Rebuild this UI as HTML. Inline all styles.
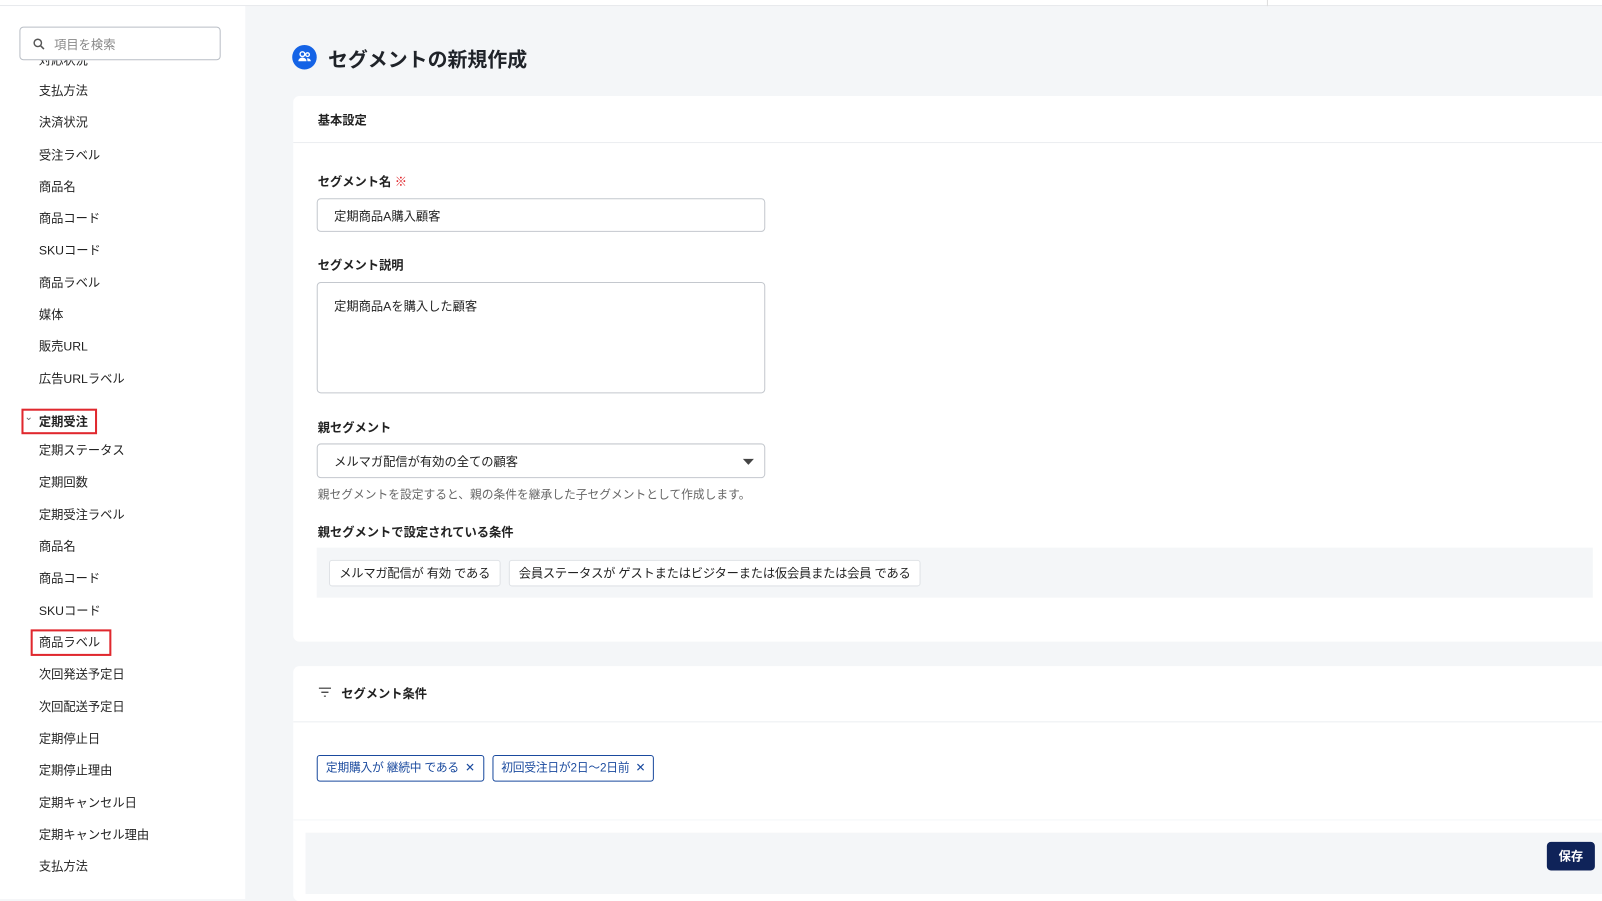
<!DOCTYPE html>
<html><head><meta charset="utf-8"><style>
*{box-sizing:border-box;margin:0;padding:0}
body{width:1602px;height:880px;overflow:hidden;background:#f4f6f8;font-family:"Liberation Sans","Noto Sans CJK JP",sans-serif;color:#1f2329;position:relative;font-size:12px}
#w{position:absolute;left:0;top:0;width:1568px;height:862px;transform:scale(1.0217);transform-origin:0 0}
.a{position:absolute;white-space:nowrap}
.side{position:absolute;left:0;top:6px;width:240px;height:874px;background:#fff;overflow:hidden}
.si{position:absolute;left:38px;font-size:12px;line-height:16px;color:#222}
.card{position:absolute;left:287px;width:1281px;background:#fff;border-radius:6px 0 0 6px}
.lbl{font-size:12px;font-weight:600;color:#222}
.inp{position:absolute;border:1px solid #c4c8ce;border-radius:4px;background:#fff;font-size:12px;color:#222}
.chips{position:absolute;display:flex;gap:8px;align-items:center}
.chip{height:26px;border:1px solid #dfe2e6;border-radius:3px;background:#fff;font-size:12px;line-height:24px;padding:0 9px;color:#222;white-space:nowrap;letter-spacing:-0.2px}
.tag{height:26px;border:1px solid #1a4a9e;border-radius:3px;background:#fff;font-size:11.5px;line-height:24px;padding:0 8px;color:#1a4a9e;white-space:nowrap;letter-spacing:-0.2px}
.red{position:absolute;border:2px solid #e0282e}
</style></head><body><div id="w">
<div class="a" style="left:0;top:0;width:1568px;height:6px;background:#fff;border-bottom:1px solid #e6e8eb"></div>
<div class="a" style="left:1240px;top:0;width:1px;height:6px;background:#ddd"></div>
<div class="side">
<div class="si" style="top:45px;">対応状況</div>
<div class="a" style="left:0;top:0;width:240px;height:53px;background:#fff"></div>
<div class="a" style="left:19px;top:20px;width:197px;height:33px;border:1px solid #b9bec5;border-radius:4px;background:#fff">
<svg class="a" style="left:12px;top:10px" width="12" height="12" viewBox="0 0 12 12"><circle cx="5" cy="5" r="3.6" fill="none" stroke="#555" stroke-width="1.4"/><path d="M7.7 7.7L11 11" stroke="#555" stroke-width="1.5"/></svg>
<span class="a" style="left:33px;top:8px;font-size:12px;color:#888">項目を検索</span></div>
<div class="si" style="top:75px">支払方法</div>
<div class="si" style="top:106px">決済状況</div>
<div class="si" style="top:138px">受注ラベル</div>
<div class="si" style="top:169px">商品名</div>
<div class="si" style="top:200px">商品コード</div>
<div class="si" style="top:231px">SKUコード</div>
<div class="si" style="top:263px">商品ラベル</div>
<div class="si" style="top:294px">媒体</div>
<div class="si" style="top:325px">販売URL</div>
<div class="si" style="top:357px">広告URLラベル</div>
<div class="a" style="left:24px;top:397px;font-size:10px;color:#666">⌄</div>
<div class="si" style="top:399px;font-weight:700">定期受注</div>
<div class="red" style="left:21px;top:394px;width:74px;height:25px"></div>
<div class="si" style="top:427px">定期ステータス</div>
<div class="si" style="top:458px">定期回数</div>
<div class="si" style="top:490px">定期受注ラベル</div>
<div class="si" style="top:521px">商品名</div>
<div class="si" style="top:552px">商品コード</div>
<div class="si" style="top:584px">SKUコード</div>
<div class="si" style="top:615px">商品ラベル</div>
<div class="red" style="left:30px;top:610px;width:79px;height:26px"></div>
<div class="si" style="top:646px">次回発送予定日</div>
<div class="si" style="top:678px">次回配送予定日</div>
<div class="si" style="top:709px">定期停止日</div>
<div class="si" style="top:740px">定期停止理由</div>
<div class="si" style="top:772px">定期キャンセル日</div>
<div class="si" style="top:803px">定期キャンセル理由</div>
<div class="si" style="top:834px">支払方法</div>
</div>

<div class="a" style="left:286px;top:44px;width:24px;height:24px;border-radius:50%;background:#1463e6">
<svg width="24" height="24" viewBox="0 0 24 24"><circle cx="10" cy="9" r="2.3" fill="none" stroke="#fff" stroke-width="1.4"/><circle cx="15" cy="9.5" r="1.8" fill="none" stroke="#fff" stroke-width="1.3"/><path d="M6 16c0-2.5 2-3.6 4-3.6s4 1.1 4 3.6z" fill="#fff"/><path d="M14.5 13c2 0 3.7 1 3.7 3h-3.2z" fill="#fff"/></svg></div>
<div class="a" style="left:321px;top:42px;font-size:19.5px;font-weight:700;color:#1f2329">セグメントの新規作成</div>

<div class="card" style="top:94px;height:534px">
<div class="a lbl" style="left:24px;top:15px">基本設定</div>
<div class="a" style="left:0;top:45px;width:1281px;height:1px;background:#eceef1"></div>
<div class="a lbl" style="left:24px;top:75px">セグメント名 <span style="color:#e0282e;font-weight:400">※</span></div>
<div class="inp" style="left:23px;top:100px;width:439px;height:33px;padding:8px 16px">定期商品A購入顧客</div>
<div class="a lbl" style="left:24px;top:157px">セグメント説明</div>
<div class="inp" style="left:23px;top:182px;width:439px;height:109px;padding:14px 16px">定期商品Aを購入した顧客</div>
<div class="a lbl" style="left:24px;top:316px">親セグメント</div>
<div class="inp" style="left:23px;top:340px;width:439px;height:34px;padding:8px 16px">メルマガ配信が有効の全ての顧客
<svg class="a" style="right:10px;top:14px" width="11" height="6"><path d="M0 0h11L5.5 6z" fill="#444"/></svg></div>
<div class="a" style="left:24px;top:382px;font-size:11.5px;color:#666">親セグメントを設定すると、親の条件を継承した子セグメントとして作成します。</div>
<div class="a lbl" style="left:24px;top:418px">親セグメントで設定されている条件</div>
<div class="chips" style="left:23px;top:442px;width:1249px;height:49px;background:#f4f6f8;padding-left:12px">
<div class="chip">メルマガ配信が 有効 である</div>
<div class="chip">会員ステータスが ゲストまたはビジターまたは仮会員または会員 である</div>
</div>
</div>

<div class="card" style="top:652px;height:230px">
<svg class="a" style="left:25px;top:21px" width="12" height="9"><path d="M0 .5h12M2.5 4.5h7M5 8.5h2" stroke="#333" stroke-width="1.2"/></svg>
<div class="a lbl" style="left:47px;top:18px">セグメント条件</div>
<div class="a" style="left:0;top:54px;width:1281px;height:1px;background:#eceef1"></div>
<div class="a" style="left:0;top:150px;width:1281px;height:1px;background:#f4f6f8"></div>
</div>
<div class="chips" style="left:310px;top:739px">
<div class="tag">定期購入が 継続中 である <span style="margin-left:3px">✕</span></div>
<div class="tag">初回受注日が2日〜2日前 <span style="margin-left:3px">✕</span></div>
</div>
<div class="a" style="left:299px;top:815px;width:1269px;height:60px;background:#f4f6f8"></div>
<div class="a" style="left:1514px;top:824px;width:47px;height:28px;background:#0f2359;border-radius:4px;color:#fff;font-weight:700;font-size:12px;line-height:28px;text-align:center">保存</div>
</div></body></html>
